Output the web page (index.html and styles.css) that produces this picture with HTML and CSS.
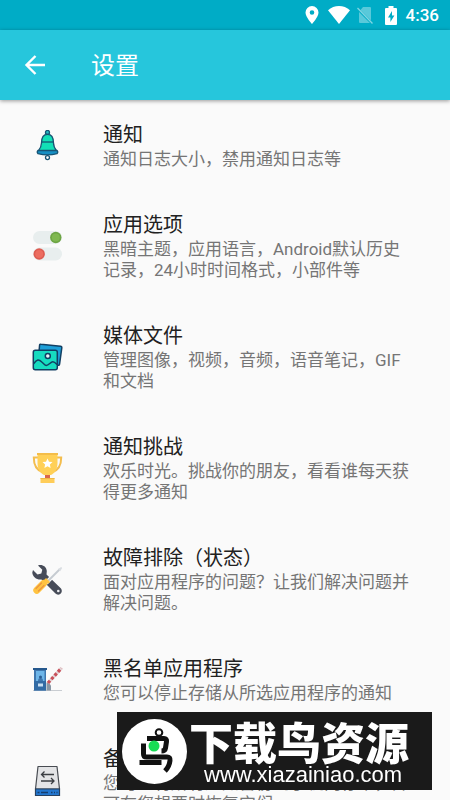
FILE: index.html
```html
<!DOCTYPE html>
<html lang="zh-CN">
<head>
  <meta charset="UTF-8">
  <meta name="viewport" content="width=device-width, initial-scale=1">
  <title>设置</title>
  <link rel="stylesheet" href="styles.css">
</head>
<body>

  <div class="status-bar">
    <svg class="status-pin" width="14" height="18" viewBox="0 0 14 18" aria-hidden="true">
      <path fill="#fff" fill-rule="evenodd" d="M7 0a6.5 6.5 0 0 0-6.5 6.5C.5 11 7 18 7 18s6.500-7 6.500-11.500A6.500 6.500 0 0 0 7 0zm0 4.200a2.300 2.300 0 1 1 0 4.600 2.300 2.300 0 0 1 0-4.600z"/>
    </svg>
    <svg class="status-wifi" width="22" height="18" viewBox="0 0 22 18" aria-hidden="true">
      <path fill="#fff" d="M11 18L0 4.200C3 1.500 7 0 11 0s8 1.500 11 4.200z"/>
    </svg>
    <svg class="status-sim" width="16" height="18" viewBox="0 0 16 18" aria-hidden="true">
      <path fill="#fff" opacity=".35" d="M6 1h7q1 0 1 1v12.500L3.500 4zM2 6l11 11H3q-1 0-1-1z"/>
      <path stroke="#fff" stroke-width="1.300" opacity=".5" d="M.5 2L15.500 17.500"/>
    </svg>
    <svg class="status-battery" width="12" height="19" viewBox="0 0 12 19" aria-hidden="true">
      <path fill="#fff" d="M3.500 0h5v2H11q1 0 1 1v15q0 1-1 1H1q-1 0-1-1V3q0-1 1-1h2.500z"/>
      <path fill="#00acc6" d="M7 5L3 11.500h2.400V16l4-6.500H7z"/>
    </svg>
    <time class="status-time">4:36</time>
  </div>

  <header class="toolbar">
    <button class="back" type="button" aria-label="返回">
      <svg width="22" height="22" viewBox="0 0 22 22" aria-hidden="true">
        <path fill="none" stroke="#fff" stroke-width="2.400" d="M21 11H3M11.500 2L2.500 11l9 9"/>
      </svg>
    </button>
    <h1>设置</h1>
  </header>

  <main class="settings">
    <a class="item" href="#notifications">
      <!-- bell -->
      <svg class="icon" viewBox="0 0 32 32" aria-hidden="true">
        <g stroke="#175474" stroke-width="1.300" stroke-linejoin="round">
          <circle cx="16.500" cy="2.400" r="2" fill="#28b9c4"/>
          <circle cx="16.500" cy="27.600" r="2" fill="#fff"/>
          <path fill="#12dfb6" d="M10.500 13C10.500 7 12.500 4.400 16.500 4.400S22.500 7 22.500 13c0 4 1.500 6 3.500 8.500H7C9 19 10.500 17 10.500 13z"/>
          <path fill="none" d="M10.500 12h12"/>
          <path fill="#168fc4" d="M7 20.500h19q1.500 1.500 0 3.200-9.500 2.400-19 0-1.500-1.700 0-3.200z"/>
        </g>
      </svg>
      <span class="text">
        <span class="title">通知</span>
        <span class="summary">通知日志大小，禁用通知日志等</span>
      </span>
    </a>

    <a class="item" href="#options">
      <!-- switches -->
      <svg class="icon" viewBox="0 0 32 32" aria-hidden="true">
        <rect x="2" y="0" width="29" height="13" rx="6.500" fill="#e8eeee"/>
        <circle cx="24.800" cy="6.500" r="5.700" fill="#6da544"/>
        <circle cx="24.800" cy="6.500" r="4" fill="#7fb850"/>
        <rect x="2" y="16.500" width="29" height="13" rx="6.500" fill="#e8eeee"/>
        <circle cx="8.200" cy="23" r="5.700" fill="#dd5b50"/>
        <circle cx="8.200" cy="23" r="4" fill="#ec6d60"/>
      </svg>
      <span class="text">
        <span class="title">应用选项</span>
        <span class="summary">黑暗主题，应用语言，Android默认历史记录，24小时时间格式，小部件等</span>
      </span>
    </a>

    <a class="item" href="#media">
      <!-- pictures -->
      <svg class="icon" viewBox="0 0 32 32" aria-hidden="true">
        <g stroke="#123f63" stroke-width="1.500" stroke-linejoin="round" stroke-linecap="round">
          <path fill="#1d9fd8" d="M8.600 3Q8.800 2 10 2.200L29.500 4.200Q31 4.400 30.800 5.800L28.600 22Q28.400 23.500 27 23.300L7 21z"/>
          <rect x="2.300" y="8.300" width="24" height="19.500" rx="2" fill="#16dcc0"/>
          <path fill="none" d="M2.800 21.500c3-4.500 5-4.500 8-1.500l3.500 3.200c3 1.500 5-3.500 7.500-3.500 1.500 0 3 1.500 4 2.500"/>
          <circle cx="16.800" cy="14" r="2.500" fill="#e9f7fb"/>
        </g>
      </svg>
      <span class="text">
        <span class="title">媒体文件</span>
        <span class="summary">管理图像，视频，音频，语音笔记，GIF和文档</span>
      </span>
    </a>

    <a class="item" href="#challenge">
      <!-- trophy -->
      <svg class="icon" viewBox="0 0 32 32" aria-hidden="true">
        <path fill="none" stroke="#f3bd4e" stroke-width="2" d="M8 4.500H2.800C2.800 12 5 17 11.500 19M25 4.500h5.200C30.200 12 28 17 21.500 19"/>
        <path fill="#d9664c" d="M14 20h5v6h-5z"/>
        <path fill="#ffd057" d="M6.500 0h20v10c0 6-3 10.500-6.500 12h-7c-3.500-1.500-6.500-6-6.500-12z"/>
        <path fill="#f4bd49" d="M6 0h21v2H6z"/>
        <path fill="#fff" d="M16.500 5.500l1.500 3.200 3.500.4-2.600 2.400.7 3.500-3.100-1.700-3.100 1.700.7-3.500-2.600-2.400 3.500-.4z"/>
        <path fill="#ffcd59" d="M9.500 25h14v5h-14z"/>
        <path fill="#efb744" d="M9.500 25h14v1h-14z"/>
      </svg>
      <span class="text">
        <span class="title">通知挑战</span>
        <span class="summary">欢乐时光。挑战你的朋友，看看谁每天获得更多通知</span>
      </span>
    </a>

    <a class="item" href="#troubleshoot">
      <!-- wrench and screwdriver -->
      <svg class="icon" viewBox="0 0 32 32" aria-hidden="true">
        <path fill="#474c59" d="M7 1.500c4-1.500 8.500 1 8.800 5.500l-.3 3.500L30 24.500c1.500 2 .8 4.500-.8 5.500-1.500 1-3.500.8-4.700-.5L10.500 15.500C6 16.200 1.500 13 1.300 8.500L2 6l4.500 4.500 3.800-1 1-3.800z"/>
        <circle cx="27.300" cy="27" r="1.300" fill="#eef0f3"/>
        <path stroke="#fafafa" stroke-width="4" d="M15 19L29 5"/>
        <path stroke="#c6cbd1" stroke-width="2" d="M15 19L28.500 5.500"/>
        <path fill="#d9dde1" d="M27 5l3.200-2 1 1-2 3.200z"/>
        <path stroke="#ffc340" stroke-width="7" stroke-linecap="round" d="M5.800 26.200l6.700-6.700"/>
        <path stroke="#ec9540" stroke-width="1.300" stroke-linecap="round" d="M5 24.500l5.500-5.500M7.500 27l5.500-5.500"/>
        <path stroke="#ffc340" stroke-width="3" d="M14 15l4 4"/>
      </svg>
      <span class="text">
        <span class="title">故障排除（状态）</span>
        <span class="summary">面对应用程序的问题？让我们解决问题并解决问题。</span>
      </span>
    </a>

    <a class="item" href="#blacklist">
      <!-- booth with barrier -->
      <svg class="icon" viewBox="0 0 32 32" aria-hidden="true">
        <path fill="#c9cdd2" d="M2 26h29v1H2z"/>
        <path fill="#3e76ae" d="M3 5h12v21.500H3z"/>
        <path fill="#6db5e8" d="M5 7h8.500v10H5z"/>
        <path fill="#25588d" d="M2 4h14v2H2z"/>
        <path fill="#3e76ae" d="M7 17q0-3 2.500-3t2.500 3z"/>
        <circle cx="9.500" cy="13" r="1.500" fill="#285b91"/>
        <path fill="#326ba5" d="M3 17h12v9.500H3z"/>
        <path fill="#c6def2" d="M7 19.500h5v3H7z"/>
        <path fill="#8997a5" d="M15.500 18.500h2l2.500 3v5h-4.500z"/>
        <path stroke="#e2d3d5" stroke-width="3.200" d="M17 19L30.500 4"/>
        <path stroke="#c9505a" stroke-width="3.200" stroke-dasharray="3 2" d="M17 19L30.500 4"/>
      </svg>
      <span class="text">
        <span class="title">黑名单应用程序</span>
        <span class="summary">您可以停止存储从所选应用程序的通知</span>
      </span>
    </a>

    <a class="item" href="#backup">
      <!-- drive -->
      <svg class="icon" viewBox="0 0 32 32" aria-hidden="true">
        <path fill="#e3e4e6" stroke="#484c52" stroke-width="1.200" stroke-linejoin="round" d="M7 1.500h19L28.500 24h-24z"/>
        <path fill="#2276cf" stroke="#27405e" stroke-width="1.200" d="M4.500 24h24v6.500h-24z"/>
        <path fill="none" stroke="#3a3d42" stroke-width="1.300" d="M23 9.500H10.500M13.500 6.500l-3 3 3 3M10 16h13M20 13l3 3-3 3"/>
        <path stroke="#163d6c" stroke-width="1.500" d="M6.500 27.500h2M10 27.500h7M20 27.500h1.500M23 27.500h1M25.500 27.500h1"/>
      </svg>
      <span class="text">
        <span class="title">备份与恢复</span>
        <span class="summary">您可以将所有通知备份到手机内存卡，并可在您想要时恢复它们</span>
      </span>
    </a>
  </main>

  <aside class="watermark">
    <svg class="watermark-logo" viewBox="0 0 65 65" aria-hidden="true">
      <circle cx="32.500" cy="32.500" r="32.500" fill="#fff"/>
      <g fill="none" stroke="#111" stroke-linejoin="round">
        <circle cx="37" cy="13.500" r="3.300" stroke-width="2"/>
        <path stroke-width="5" d="M25 19.500h17q3 0 2.500 3L43.500 29q-.5 3-4 3"/>
        <path stroke-width="5" d="M21.500 24.500V35q0 3 3 3H45q3.500 0 3 3.500C47.500 46 46 49 43 52"/>
        <path stroke-width="5" d="M17.500 43.500h22"/>
      </g>
      <circle cx="32" cy="27" r="5.500" fill="#18dc55"/>
    </svg>
    <div class="watermark-text">
      <strong>下载鸟资源</strong>
      <span>www.xiazainiao.com</span>
    </div>
  </aside>

</body>
</html>
```
FILE: styles.css
```css
* { margin: 0; padding: 0; box-sizing: border-box; }

body {
  height: 100vh;
  display: flex;
  flex-direction: column;
  overflow: hidden;
  background: #fafafa;
  font-family: Roboto, "Noto Sans CJK SC", sans-serif;
}

.status-bar {
  flex: none;
  height: 30px;
  padding: 0 11px;
  display: flex;
  align-items: center;
  justify-content: flex-end;
  background: #00acc6;
  color: #fff;
}

.status-wifi { margin-left: 9px; }
.status-sim { margin-left: 7px; }
.status-battery { margin-left: 12px; }

.status-time {
  margin-left: 9px;
  font-size: 17px;
  font-weight: 500;
  line-height: 30px;
}

.toolbar {
  flex: none;
  position: relative;
  height: 70px;
  padding: 0 24px;
  display: flex;
  align-items: center;
  gap: 45px;
  background: #26c6dc;
  color: #fff;
  box-shadow: 0 1px 4px rgba(0, 0, 0, 0.4);
}

.back {
  display: flex;
  border: 0;
  background: none;
  cursor: pointer;
}

.toolbar h1 {
  padding-top: 2px;
  font-size: 24px;
  font-weight: 400;
  line-height: 36px;
}

.settings {
  flex: 1;
  min-height: 0;
  padding-top: 1px;
  overflow-y: auto;
  scrollbar-width: none;
}

.item {
  display: flex;
  align-items: center;
  gap: 40px;
  padding: 21px 36px 21px 31px;
  color: #212121;
  text-decoration: none;
}

.icon {
  flex: none;
  width: 32px;
  height: 32px;
}

.text {
  flex: 1;
  min-width: 0;
}

.title,
.summary {
  display: block;
}

.title {
  font-size: 20px;
  line-height: 27px;
}

.summary {
  color: #757575;
  font-size: 17px;
  line-height: 21px;
}

.watermark {
  position: fixed;
  right: 18px;
  bottom: 10px;
  width: 315px;
  height: 78px;
  padding-left: 5px;
  display: flex;
  align-items: center;
  gap: 2px;
  background: #1a1a1a;
  color: #fff;
}

.watermark-logo {
  flex: none;
  width: 65px;
  height: 65px;
}

.watermark-text {
  display: flex;
  flex-direction: column;
  padding-top: 4px;
  white-space: nowrap;
}

.watermark-text strong {
  font-family: "Noto Sans CJK SC", sans-serif;
  font-size: 44px;
  font-weight: 900;
  line-height: 44px;
}

.watermark-text span {
  padding-left: 15px;
  font-family: "Liberation Sans", Arial, sans-serif;
  font-size: 22px;
  line-height: 24px;
}
```
